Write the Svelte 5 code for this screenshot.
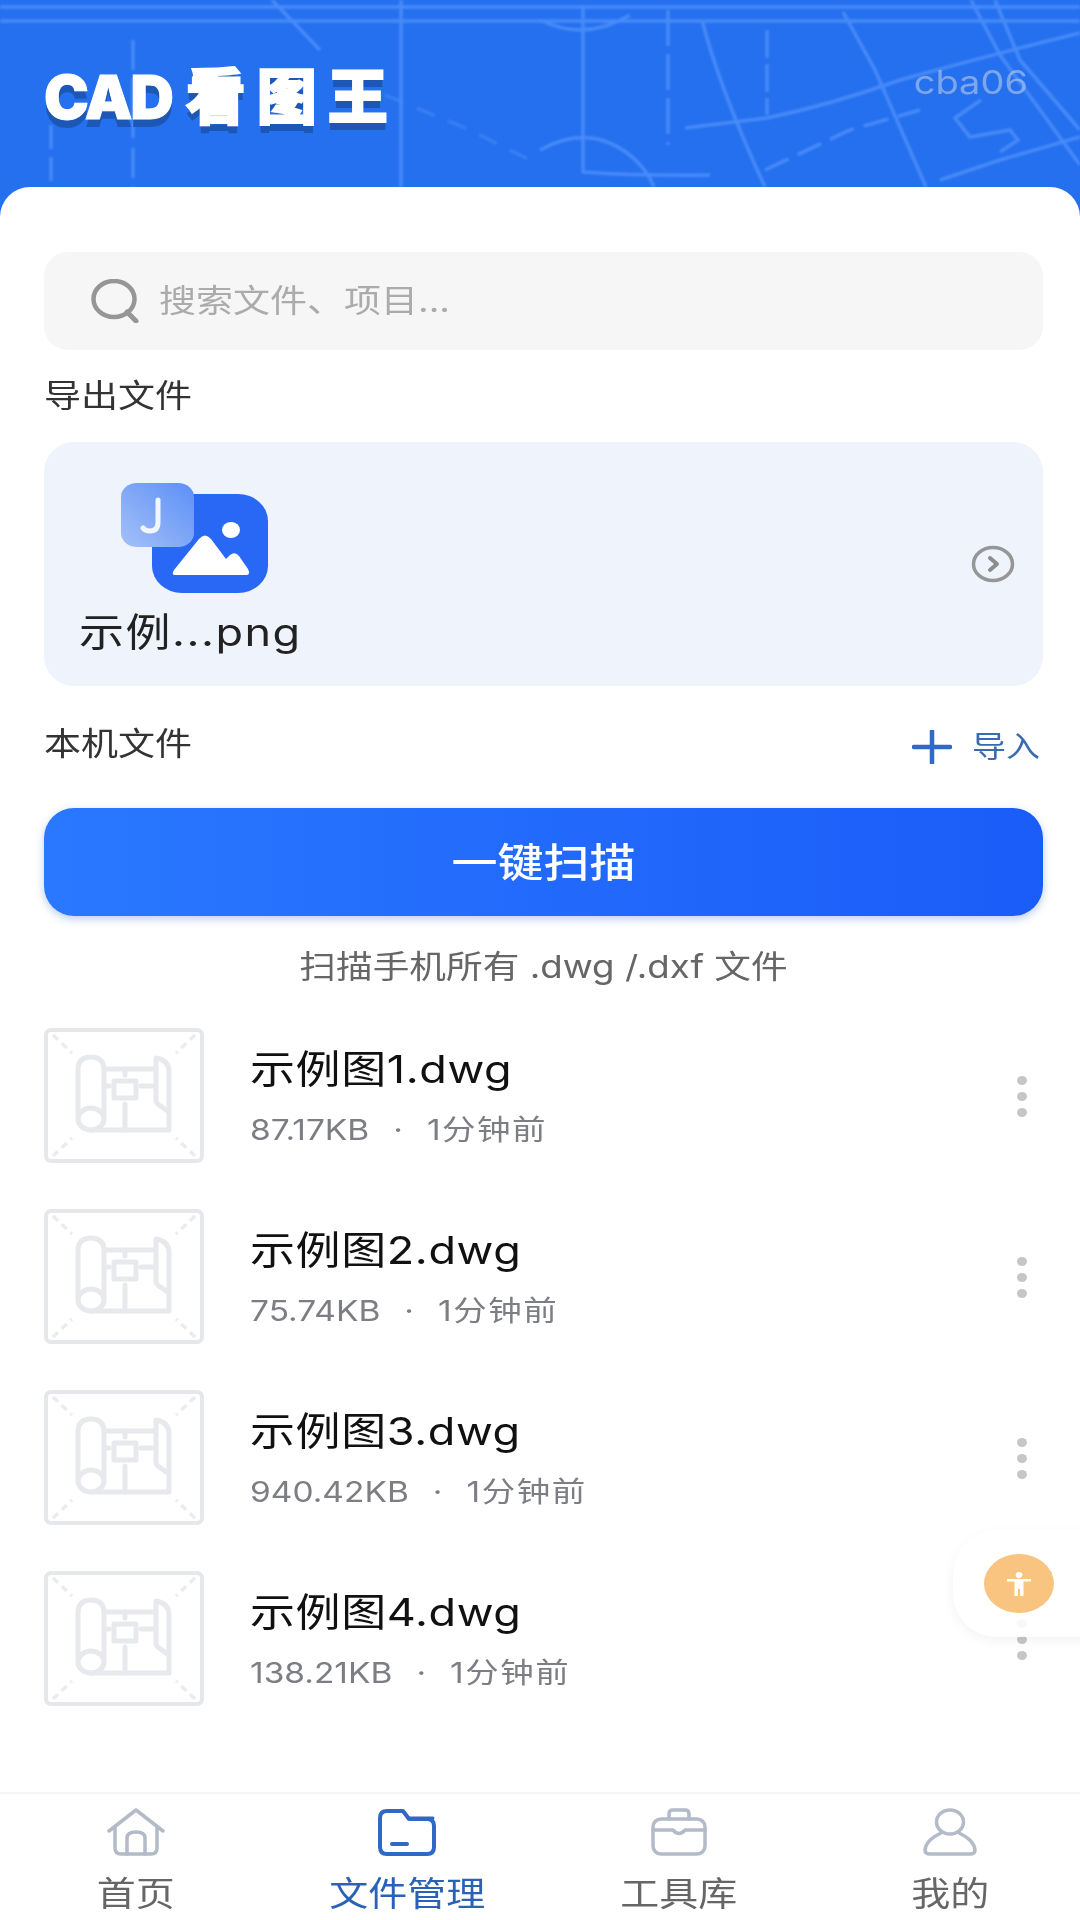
<script lang="ts">
	const files = [
		{ name: '示例图1.dwg', size: '87.17KB' },
		{ name: '示例图2.dwg', size: '75.74KB' },
		{ name: '示例图3.dwg', size: '940.42KB' },
		{ name: '示例图4.dwg', size: '138.21KB' }
	];

	const tabs = [
		{ key: 'home', label: '首页' },
		{ key: 'files', label: '文件管理' },
		{ key: 'tools', label: '工具库' },
		{ key: 'me', label: '我的' }
	];
	const activeTab = 'files';
</script>

<div class="page">
	<!-- Blue header with blueprint lines -->
	<header class="header">
		<svg class="blueprint" viewBox="0 0 1080 217" width="1080" height="217" fill="none" aria-hidden="true">
			<g stroke="#4f90fb" stroke-width="3.5" opacity="0.85">
				<path d="M0 7H1080" />
				<path d="M0 21H1080" />
				<path d="M401 0V187" />
				<path d="M133 40V187" stroke-dasharray="30 8 60 10" />
				<path d="M51 125V187" stroke-dasharray="24 8" />
				<path d="M272 0L320 50" />
				<path d="M385 95L470 130L540 165" stroke-dasharray="20 14" opacity="0.6" />
				<path d="M540 20Q585 42 630 15" />
				<path d="M583 5V172Q640 176 710 175" />
				<path d="M668 10V145" stroke-dasharray="36 8" />
				<path d="M702 20Q720 90 765 187" />
				<path d="M767 30V115" stroke-dasharray="28 6" />
				<path d="M685 128L767 118Q830 105 900 80Q990 55 1080 33" />
				<path d="M843 12L875 70L926 187" />
				<path d="M971 0L1000 55L1080 165" />
				<path d="M995 0L1020 60L1080 130" />
				<path d="M540 150Q585 125 623 150Q645 165 654 187" />
				<path d="M765 170L850 130L920 110" stroke-dasharray="26 10" />
				<path d="M981 100L955 118L970 137L1010 130L1018 140L1000 152" />
				<path d="M940 180L1000 160L1080 137" />
			</g>
		</svg>
		<h1 class="logo"><span class="logo-latin">CAD</span><span class="logo-cjk">看图王</span></h1>
		<span class="user">cba06</span>
	</header>

	<main class="card">
		<div class="search">
			<svg class="search-icon" width="50" height="44" viewBox="0 0 50 44" fill="none" aria-hidden="true">
				<ellipse cx="23" cy="20" rx="20.5" ry="18" stroke="#969696" stroke-width="4.5" />
				<path d="M36 33L45 42" stroke="#969696" stroke-width="5" stroke-linecap="round" />
			</svg>
			<span class="search-text">搜索文件、项目...</span>
		</div>

		<div class="section-title first"><span class="squash">导出文件</span></div>

		<section class="export">
			<div class="export-main">
				<svg class="export-icon" width="147" height="110" viewBox="0 -2 147 110" aria-hidden="true">
					<defs>
						<linearGradient id="jbadge" x1="0" y1="1" x2="1" y2="0">
							<stop offset="0" stop-color="#a4c0f8" />
							<stop offset="1" stop-color="#5c8ff6" />
						</linearGradient>
					</defs>
					<rect x="31" y="9" width="116" height="99" rx="30" ry="27" fill="#2868f4" />
					<path d="M54 90Q50 90 53 85L78 54Q84 47 90 54L105 74L109 70Q114 66 118 71L127 84Q130 90 125 90Z" fill="#fff" />
					<ellipse cx="110" cy="45" rx="9" ry="8" fill="#fff" />
					<rect x="0" y="-2" width="73" height="64" rx="16" ry="14" fill="url(#jbadge)" />
					<path d="M37 15V37Q37 46 29 46Q24 46 22 43" fill="none" stroke="#f2f6ff" stroke-width="5" stroke-linecap="round" />
				</svg>
				<div class="export-name"><span class="squash">示例...png</span></div>
			</div>
			<svg class="chevron" width="44" height="38" viewBox="0 0 44 38" fill="none" aria-hidden="true">
				<ellipse cx="22" cy="19" rx="19.5" ry="16.5" stroke="#969696" stroke-width="3.5" />
				<path d="M19 13L26 19L19 25" stroke="#8c8c8c" stroke-width="4" stroke-linecap="round" stroke-linejoin="round" />
			</svg>
		</section>

		<div class="local-row">
			<div class="section-title"><span class="squash">本机文件</span></div>
			<button class="import">
				<svg class="plus" width="40" height="34" viewBox="0 0 40 34" fill="none" aria-hidden="true">
					<path d="M2 17H38M20 1V33" stroke="#2f6ac6" stroke-width="4.5" stroke-linecap="round" />
				</svg>
				<span class="squash">导入</span>
			</button>
		</div>

		<button class="scan"><span class="squash">一键扫描</span></button>
		<p class="scan-hint"><span class="squash">扫描手机所有 .dwg /.dxf 文件</span></p>

		<ul class="list">
			{#each files as file}
				<li class="row">
					<div class="thumb">
						<svg width="152" height="127" viewBox="4 4 152 127" fill="none" aria-hidden="true">
							<g stroke="#ebecee" stroke-width="3.5">
								<path d="M9 7L28 25M151 7L132 25M9 128L28 110M151 128L132 110" stroke-dasharray="7 5" />
							</g>
							<g stroke="#e8e9ec" stroke-width="5" stroke-linecap="round" stroke-linejoin="round">
								<path d="M60 41H110" />
								<path d="M34 88V42Q34 29 47 29Q60 29 60 42V88" />
								<ellipse cx="47" cy="91" rx="13" ry="11" />
								<path d="M47 102H125V84L118 79Q112 76 112 72V30Q125 32 125 44V84" />
								<rect x="70" y="53" width="22" height="17" />
								<path d="M81 41V47M60 58H65M97 58H110M81 76V102" />
							</g>
						</svg>
					</div>
					<div class="meta">
						<div class="name"><span class="squash">{file.name}</span></div>
						<div class="sub"><span class="squash">{file.size}<span class="sep">·</span><span class="time">1分钟前</span></span></div>
					</div>
					<div class="dots" aria-hidden="true"><i></i><i></i><i></i></div>
				</li>
			{/each}
		</ul>
	</main>

	<!-- Floating accessibility button -->
	<div class="float">
		<div class="float-circle">
			<svg width="26" height="26" viewBox="0 0 26 26" fill="#fff" aria-hidden="true">
				<ellipse cx="13" cy="4" rx="3.4" ry="3" />
				<path d="M1 8H25V10.5H17.5V25H14V18H12V25H8.5V10.5H1Z" />
			</svg>
		</div>
	</div>

	<nav class="tabbar">
		{#each tabs as tab}
			<div class="tab" class:active={tab.key === activeTab}>
				<svg class="tab-icon" width="60" height="48" viewBox="0 0 60 48" fill="none" stroke-width="3.5" stroke-linecap="round" stroke-linejoin="round" aria-hidden="true">
					{#if tab.key === 'home'}
						<path d="M3 23L30 2L57 23" stroke="#b3bac8" />
						<path d="M9 19V40Q9 46 15 46H45Q51 46 51 40V19" stroke="#b3bac8" />
						<path d="M21 46V30Q21 24 30 24Q39 24 39 30V46" stroke="#b3bac8" />
					{:else if tab.key === 'files'}
						<path d="M10 3H26L32 11H50Q57 11 57 18V39Q57 46 50 46H10Q3 46 3 39V10Q3 3 10 3Z" stroke="#2e69c6" stroke-width="4" />
						<path d="M31 10H56" stroke="#2e69c6" stroke-width="3" />
						<path d="M15 36H30" stroke="#2e69c6" stroke-width="4" />
					{:else if tab.key === 'tools'}
						<rect x="4" y="11" width="52" height="35" rx="8" stroke="#b3bac8" />
						<path d="M20 11V6Q20 2 24 2H36Q40 2 40 6V11" stroke="#b3bac8" />
						<path d="M4 22H24Q30 29 36 22H56" stroke="#b3bac8" />
					{:else}
						<ellipse cx="30" cy="14" rx="13.5" ry="12" stroke="#b3bac8" />
						<path d="M21 25Q6 32 5 42Q5 46 10 46H50Q55 46 55 42Q54 32 39 25" stroke="#b3bac8" />
					{/if}
				</svg>
				<span class="tab-label">{tab.label}</span>
			</div>
		{/each}
	</nav>
</div>

<style>
	:global(body) {
		margin: 0;
		background: #fff;
	}

	.page {
		position: relative;
		display: flex;
		flex-direction: column;
		width: 1080px;
		height: 1920px;
		overflow: hidden;
		background: #fff;
		font-family: Inter, "Noto Sans CJK SC", sans-serif;
	}

	/* The source picture is slightly flattened, so text is too */
	.squash,
	.search-text,
	.tab-label,
	.user {
		display: inline-block;
		transform: scaleY(0.86);
	}

	/* Header */
	.header {
		position: relative;
		flex: none;
		display: flex;
		justify-content: space-between;
		align-items: flex-start;
		box-sizing: border-box;
		height: 217px;
		padding: 62px 52px 0 44px;
		background: #2470ef;
	}

	.blueprint {
		position: absolute;
		top: 0;
		left: 0;
		filter: blur(0.8px);
	}

	.logo {
		position: relative;
		margin: 0;
		height: 70px;
		line-height: 70px;
		color: #fff;
		font-weight: 900;
		text-shadow: 0 8px 0 #1d57b5;
		white-space: nowrap;
	}

	.logo-latin {
		font-size: 60px;
		letter-spacing: -2px;
		-webkit-text-stroke: 1px #fff;
	}

	.logo-cjk {
		margin-left: 14px;
		font-size: 60px;
		letter-spacing: 11px;
		-webkit-text-stroke: 2px #fff;
	}

	.user {
		position: relative;
		margin-top: -2px;
		line-height: 44px;
		font-size: 38px;
		color: rgba(214, 220, 232, 0.5);
	}

	/* Card */
	.card {
		flex: 1;
		position: relative;
		box-sizing: border-box;
		margin-top: -30px;
		padding: 65px 37px 0 44px;
		background: #fff;
		border-radius: 30px 30px 0 0;
	}

	.search {
		display: flex;
		align-items: center;
		gap: 18px;
		box-sizing: border-box;
		height: 98px;
		padding-left: 47px;
		background: #f6f6f6;
		border-radius: 24px;
	}

	.search-text {
		margin-bottom: 7px;
		font-size: 37px;
		color: #ababab;
	}

	.section-title {
		line-height: 44px;
		font-size: 37px;
		color: #333;
	}

	.section-title.first {
		margin-top: 24px;
		margin-bottom: -1px;
	}

	.export {
		display: flex;
		justify-content: space-between;
		align-items: center;
		box-sizing: border-box;
		height: 244px;
		margin-top: 25px;
		padding-right: 28px;
		background: #eef3fc;
		border-radius: 30px;
	}

	.export-main {
		padding-top: 12px;
	}

	.export-icon {
		display: block;
		margin-left: 77px;
	}

	.export-name {
		margin: 14px 0 0 35px;
		line-height: 50px;
		font-size: 45px;
		letter-spacing: 1.5px;
		color: #222;
	}

	.local-row {
		display: flex;
		justify-content: space-between;
		align-items: center;
		height: 44px;
		margin-top: 36px;
	}

	.import {
		display: flex;
		align-items: center;
		gap: 20px;
		padding: 0 3px 0 0;
		border: 0;
		background: none;
		font: inherit;
		font-size: 34px;
		color: #3a6bb0;
	}

	.plus {
		margin-top: 5px;
	}

	.scan {
		display: block;
		width: 999px;
		height: 108px;
		margin-top: 42px;
		padding: 0 0 4px;
		border: 0;
		border-radius: 30px;
		background: linear-gradient(90deg, #2a78ff, #1a5cf8);
		box-shadow: 0 3px 8px rgba(30, 90, 200, 0.3);
		font: inherit;
		font-size: 46px;
		font-weight: 500;
		color: #fff;
	}

	.scan-hint {
		width: 999px;
		margin: 29px 0 0;
		line-height: 44px;
		font-size: 36.7px;
		color: #666;
		text-align: center;
	}

	/* File list */
	.list {
		display: flex;
		flex-direction: column;
		gap: 46px;
		margin: 39px 0 0;
		padding: 0;
		list-style: none;
	}

	.row {
		display: flex;
		align-items: flex-start;
		height: 135px;
	}

	.thumb {
		flex: none;
		box-sizing: border-box;
		width: 160px;
		height: 135px;
		margin-right: 46px;
		border: 4px solid #e6e7ea;
		border-radius: 7px;
	}

	.thumb svg {
		display: block;
	}

	.meta {
		flex: 1;
		padding-top: 16px;
	}

	.name {
		line-height: 50px;
		font-size: 45px;
		letter-spacing: 0.6px;
		color: #111;
	}

	.sub {
		margin-top: 14px;
		line-height: 44px;
		font-size: 33.5px;
		color: #7c7e84;
	}

	.sep {
		margin: 0 24px;
	}

	.time {
		letter-spacing: 1.5px;
	}

	.dots {
		display: flex;
		flex-direction: column;
		gap: 7px;
		align-self: center;
		margin: 2px 16px 0 0;
	}

	.dots i {
		display: block;
		width: 10px;
		height: 9px;
		border-radius: 50%;
		background: #c6c6c6;
	}

	/* Floating button */
	.float {
		position: absolute;
		top: 1530px;
		right: -40px;
		display: flex;
		align-items: center;
		box-sizing: border-box;
		width: 167px;
		height: 107px;
		padding-left: 31px;
		background: rgba(255, 255, 255, 0.88);
		border-radius: 44px;
		box-shadow: 0 4px 12px rgba(0, 0, 0, 0.05);
	}

	.float-circle {
		display: flex;
		justify-content: center;
		align-items: center;
		width: 70px;
		height: 59px;
		border-radius: 50%;
		background: #f8c47f;
	}

	/* Tab bar */
	.tabbar {
		flex: none;
		display: grid;
		grid-template-columns: repeat(4, 271.5px);
		height: 128px;
		box-sizing: border-box;
		border-top: 2px solid #f6f6f6;
		background: #fff;
	}

	.tab {
		display: flex;
		flex-direction: column;
		align-items: center;
		padding-top: 14px;
	}

	.tab-icon {
		display: block;
	}

	.tab-label {
		margin-top: 13px;
		line-height: 50px;
		font-size: 39px;
		color: #666;
	}

	.tab.active .tab-label {
		color: #2a62b8;
	}
</style>
